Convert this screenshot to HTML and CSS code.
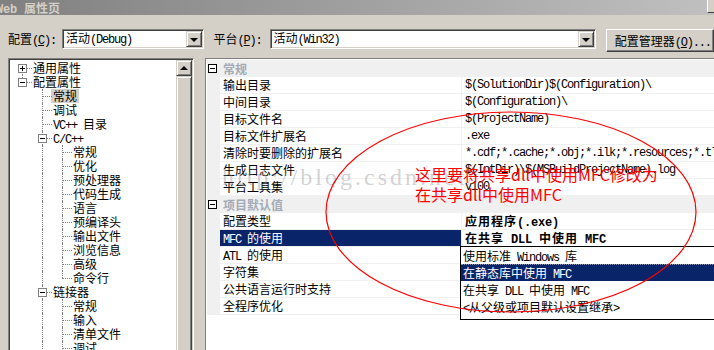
FILE: index.html
```html
<!DOCTYPE html>
<html lang="zh-CN">
<head>
  <meta charset="UTF-8">
  <title>Web 属性页</title>
  <link rel="stylesheet" href="styles.css">
</head>
<body>

  <!-- Pəncərə başlığı -->
  <div class="titlebar">
    <span class="title"><span class="lat">Web </span>属性页</span>
    <span class="cap-btn"></span>
  </div>

  <!-- Konfiqurasiya sətri -->
  <div class="toolbar">
    <label class="field-label label-config">配置<span class="lat">(<u>C</u>):</span></label>
    <div class="combo combo-config">
      <span class="combo-text">活动<span class="lat">(Debug)</span></span>
      <span class="drop-btn"></span>
    </div>
    <label class="field-label label-platform">平台<span class="lat">(<u>P</u>):</span></label>
    <div class="combo combo-platform">
      <span class="combo-text">活动<span class="lat">(Win32)</span></span>
      <span class="drop-btn"></span>
    </div>
    <button class="btn">配置管理器<span class="lat">(<u>O</u>)...</span></button>
  </div>

  <div class="main">
    <!-- Sol ağac -->
    <div class="tree">
      <ul class="tree-list">
        <li class="node"><i class="g start"><b class="box plus"></b></i><span class="label">通用属性</span></li>
        <li class="node"><i class="g end"><b class="box"></b></i><span class="label">配置属性</span></li>
        <li class="node"><i class="g"></i><i class="g tee"></i><span class="label selected">常规</span></li>
        <li class="node"><i class="g"></i><i class="g tee"></i><span class="label">调试</span></li>
        <li class="node"><i class="g"></i><i class="g tee"></i><span class="label"><span class="lat">VC++ </span>目录</span></li>
        <li class="node"><i class="g"></i><i class="g tee"><b class="box"></b></i><span class="label"><span class="lat">C/C++</span></span></li>
        <li class="node"><i class="g"></i><i class="g v"></i><i class="g tee"></i><span class="label">常规</span></li>
        <li class="node"><i class="g"></i><i class="g v"></i><i class="g tee"></i><span class="label">优化</span></li>
        <li class="node"><i class="g"></i><i class="g v"></i><i class="g tee"></i><span class="label">预处理器</span></li>
        <li class="node"><i class="g"></i><i class="g v"></i><i class="g tee"></i><span class="label">代码生成</span></li>
        <li class="node"><i class="g"></i><i class="g v"></i><i class="g tee"></i><span class="label">语言</span></li>
        <li class="node"><i class="g"></i><i class="g v"></i><i class="g tee"></i><span class="label">预编译头</span></li>
        <li class="node"><i class="g"></i><i class="g v"></i><i class="g tee"></i><span class="label">输出文件</span></li>
        <li class="node"><i class="g"></i><i class="g v"></i><i class="g tee"></i><span class="label">浏览信息</span></li>
        <li class="node"><i class="g"></i><i class="g v"></i><i class="g tee"></i><span class="label">高级</span></li>
        <li class="node"><i class="g"></i><i class="g v"></i><i class="g end"></i><span class="label">命令行</span></li>
        <li class="node"><i class="g"></i><i class="g tee"><b class="box"></b></i><span class="label">链接器</span></li>
        <li class="node"><i class="g"></i><i class="g v"></i><i class="g tee"></i><span class="label">常规</span></li>
        <li class="node"><i class="g"></i><i class="g v"></i><i class="g tee"></i><span class="label">输入</span></li>
        <li class="node"><i class="g"></i><i class="g v"></i><i class="g tee"></i><span class="label">清单文件</span></li>
        <li class="node"><i class="g"></i><i class="g v"></i><i class="g tee"></i><span class="label">调试</span></li>
      </ul>
      <div class="scrollbar">
        <div class="scroll-up"></div>
        <div class="scroll-thumb"></div>
      </div>
    </div>

    <!-- Xassələr cədvəli -->
    <div class="grid">
      <div class="section">
        <div class="cat"><b class="cat-box"></b><span class="cat-name">常规</span></div>
        <div class="row"><div class="name">输出目录</div><div class="value lat">$(SolutionDir)$(Configuration)\</div></div>
        <div class="row"><div class="name">中间目录</div><div class="value lat">$(Configuration)\</div></div>
        <div class="row"><div class="name">目标文件名</div><div class="value lat">$(ProjectName)</div></div>
        <div class="row"><div class="name">目标文件扩展名</div><div class="value lat">.exe</div></div>
        <div class="row"><div class="name">清除时要删除的扩展名</div><div class="value lat">*.cdf;*.cache;*.obj;*.ilk;*.resources;*.tlb;*.tli;*.tlh;*.tmp;*.rsp</div></div>
        <div class="row"><div class="name">生成日志文件</div><div class="value lat">$(IntDir)\$(MSBuildProjectName).log</div></div>
        <div class="row"><div class="name">平台工具集</div><div class="value lat">v100</div></div>
      </div>
      <div class="section">
        <div class="cat"><b class="cat-box"></b><span class="cat-name">项目默认值</span></div>
        <div class="row"><div class="name">配置类型</div><div class="value strong">应用程序<span class="lat">(.exe)</span></div></div>
        <div class="row selected"><div class="name"><span class="lat">MFC </span>的使用</div><div class="value strong">在共享<span class="lat"> DLL </span>中使用<span class="lat"> MFC</span></div></div>
        <div class="row"><div class="name"><span class="lat">ATL </span>的使用</div><div class="value"></div></div>
        <div class="row"><div class="name">字符集</div><div class="value"></div></div>
        <div class="row"><div class="name">公共语言运行时支持</div><div class="value"></div></div>
        <div class="row"><div class="name">全程序优化</div><div class="value"></div></div>
      </div>
    </div>
  </div>

  <!-- Açılan siyahı -->
  <ul class="dropdown-list">
    <li>使用标准<span class="lat"> Windows </span>库</li>
    <li class="current">在静态库中使用<span class="lat"> MFC</span></li>
    <li>在共享<span class="lat"> DLL </span>中使用<span class="lat"> MFC</span></li>
    <li><span class="lat">&lt;</span>从父级或项目默认设置继承<span class="lat">&gt;</span></li>
  </ul>

  <!-- Ekran şəklinin üstündəki qeydlər -->
  <div class="watermark">http://blog.csdn.net/</div>
  <svg class="markup" width="714" height="350" viewBox="0 0 714 350">
    <ellipse cx="511" cy="212" rx="185" ry="100" fill="none" stroke="#ff0000" stroke-width="1.2"/>
  </svg>
  <div class="note">这里要将共享dll中使用MFC修改为<br>在共享dll中使用MFC</div>

</body>
</html>
```

FILE: styles.css
```css
* {
  margin: 0;
  padding: 0;
  box-sizing: border-box;
}
body {
  width: 714px;
  height: 350px;
  overflow: hidden;
  position: relative;
  background-color: #d4d0c8;
  font-family: "Noto Sans CJK SC", sans-serif;
  font-size: 12px;
  color: #000;
}
.lat {
  font-family: "Liberation Mono", "Noto Sans CJK SC", monospace;
  font-size: 12px;
  letter-spacing: -1.2px;
}

/* başlıq */
.titlebar {
  height: 15px;
  background: linear-gradient(to right, #808080, #c0c0c0);
  display: flex;
  justify-content: space-between;
  overflow: hidden;
}
.title {
  color: #d4d0c8;
  font-weight: bold;
  line-height: 15px;
  margin-left: -4px;
}
.title .lat {
  letter-spacing: -0.2px;
}
.cap-btn {
  width: 16px;
  height: 13px;
  margin-right: -9px;
  background-color: #d4d0c8;
  border-left: 1px solid #fff;
  border-bottom: 1px solid #404040;
}

/* konfiqurasiya sətri */
.toolbar {
  display: flex;
  align-items: flex-start;
  height: 43px;
  padding: 14px 0 0 8px;
  white-space: nowrap;
}
.field-label {
  line-height: 20px;
}
.label-config {
  width: 55px;
}
.label-platform {
  width: 57px;
  margin-left: 10px;
}
.combo {
  height: 20px;
  padding: 1px;
  background-color: #fff;
  border: 1px solid;
  border-color: #808080 #fff #fff #808080;
  box-shadow: inset 1px 1px #404040, inset -1px -1px #d4d0c8;
  display: flex;
  justify-content: space-between;
  align-items: center;
}
.combo-config {
  width: 144px;
}
.combo-platform {
  width: 332px;
}
.combo-text {
  padding-left: 2px;
  line-height: 16px;
}
.drop-btn,
.scroll-up,
.scroll-thumb {
  background-color: #d4d0c8;
  border: 1px solid;
  border-color: #d4d0c8 #404040 #404040 #d4d0c8;
  box-shadow: inset 1px 1px #fff, inset -1px -1px #808080;
}
.drop-btn {
  width: 16px;
  height: 16px;
  display: flex;
  justify-content: center;
  align-items: center;
}
.drop-btn::after {
  content: "";
  border-style: solid;
  border-width: 4px 4px 0;
  border-color: #000 transparent transparent;
  margin-top: 1px;
}
.btn {
  width: 110px;
  height: 23px;
  margin-left: 10px;
  padding-left: 8px;
  text-align: left;
  font: inherit;
  background-color: #d4d0c8;
  border: 1px solid;
  border-color: #fff #404040 #404040 #fff;
  box-shadow: inset -1px -1px #808080;
}

/* əsas hissə */
.main {
  display: flex;
  padding-left: 8px;
  height: 300px;
}
.tree {
  width: 186px;
  flex: none;
  display: flex;
  padding: 1px;
  background-color: #fff;
  border: 1px solid;
  border-color: #808080 #fff #fff #808080;
  box-shadow: inset 1px 1px #404040, inset -1px -1px #d4d0c8;
}
.tree-list {
  flex: 1;
  list-style: none;
  padding: 1px 0 0 2px;
  overflow: hidden;
}
.node {
  display: flex;
  height: 14px;
  line-height: 14px;
  white-space: nowrap;
}
.g {
  position: relative;
  width: 20px;
  height: 14px;
  flex: none;
}
.v::before,
.tee::before,
.end::before,
.start::before {
  content: "";
  position: absolute;
  left: 10px;
  top: 0;
  bottom: 0;
  border-left: 1px dotted #808080;
}
.end::before {
  bottom: 7px;
}
.start::before {
  top: 7px;
}
.tee::after,
.end::after,
.start::after {
  content: "";
  position: absolute;
  left: 10px;
  right: 0;
  top: 7px;
  border-top: 1px dotted #808080;
}
.box {
  position: absolute;
  left: 6px;
  top: 3px;
  width: 9px;
  height: 9px;
  z-index: 1;
  background-color: #fff;
  border: 1px solid #808080;
}
.box::before {
  content: "";
  position: absolute;
  left: 1px;
  top: 3px;
  width: 5px;
  height: 1px;
  background-color: #000;
}
.plus::after {
  content: "";
  position: absolute;
  left: 3px;
  top: 1px;
  width: 1px;
  height: 5px;
  background-color: #000;
}
.label {
  margin-left: -1px;
  padding: 0 2px;
}
.label.selected {
  background-color: #d4d0c8;
}
.scrollbar {
  width: 16px;
  flex: none;
  display: flex;
  flex-direction: column;
}
.scroll-up {
  height: 16px;
  display: flex;
  justify-content: center;
  align-items: center;
}
.scroll-up::after {
  content: "";
  border-style: solid;
  border-width: 0 4px 4px;
  border-color: transparent transparent #000;
  margin-top: -1px;
}
.scroll-thumb {
  flex: 1;
}

/* xassələr */
.grid {
  width: 520px;
  flex: none;
  margin-left: 11px;
  padding: 1px;
  background-color: #fff;
  border: 1px solid;
  border-color: #808080 #fff #fff #808080;
}
.section {
  background-color: #f0f0f0;
}
.cat {
  height: 17px;
  display: flex;
  align-items: center;
  font-weight: bold;
  color: #a3aab6;
}
.cat-box {
  position: relative;
  width: 9px;
  height: 9px;
  margin-left: 1px;
  background-color: #fff;
  border: 1px solid #000;
}
.cat-box::before {
  content: "";
  position: absolute;
  left: 1px;
  top: 3px;
  width: 5px;
  height: 1px;
  background-color: #000;
}
.cat-name {
  margin-left: 6px;
}
.row {
  display: flex;
  height: 17px;
  margin-left: 13px;
  line-height: 16px;
  white-space: nowrap;
  background-color: #fff;
  border-bottom: 1px solid #f0f0f0;
}
.name {
  width: 242px;
  flex: none;
  padding-left: 3px;
  border-right: 1px solid #f0f0f0;
}
.value {
  flex: 1;
  padding-left: 3px;
  overflow: hidden;
}
.row.selected .name {
  background-color: #0a246a;
  color: #fff;
}
.strong {
  font-weight: bold;
  letter-spacing: 1px;
}
.strong .lat {
  letter-spacing: -0.2px;
}

/* açılan siyahı */
.dropdown-list {
  position: absolute;
  left: 460px;
  top: 246px;
  width: 260px;
  height: 74px;
  list-style: none;
  background-color: #fff;
  border: 1px solid #000;
}
.dropdown-list li {
  height: 17px;
  line-height: 17px;
  padding-left: 2px;
  white-space: nowrap;
}
.dropdown-list .current {
  background-color: #0a246a;
  color: #fff;
  border-top: 1px dotted #8c96b4;
  line-height: 15px;
}

/* qeydlər */
.watermark {
  position: absolute;
  left: 222px;
  top: 164px;
  font-family: "Liberation Serif", serif;
  font-size: 24px;
  letter-spacing: 3px;
  color: rgba(140, 140, 140, 0.4);
  white-space: nowrap;
}
.markup {
  position: absolute;
  left: 0;
  top: 0;
}
.note {
  position: absolute;
  left: 415px;
  top: 164px;
  color: #ff0000;
  font-size: 16px;
  line-height: 20px;
  white-space: nowrap;
}
```
